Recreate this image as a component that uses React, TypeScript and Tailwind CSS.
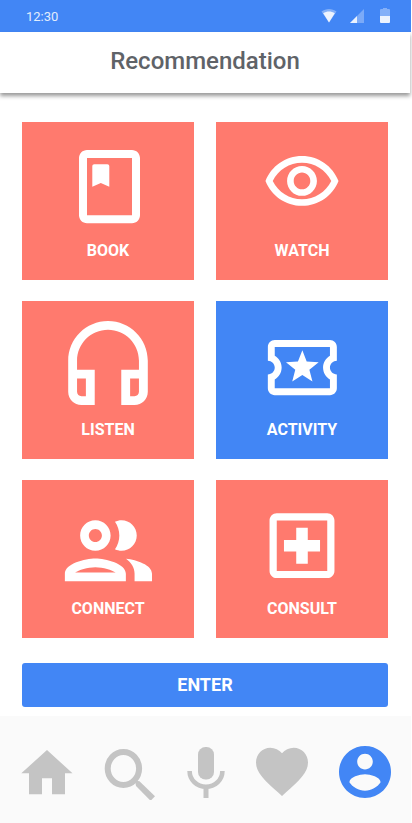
import type { ReactNode } from "react";
import { useState } from "react";

type Tile = {
  label: string;
  viewBox: string;
  art: ReactNode;
};

const tiles: Tile[] = [
  {
    label: "BOOK",
    viewBox: "0 0 88 88",
    art: (
      <>
        <path
          fillRule="evenodd"
          d="M23 8h45c4.4 0 8 3.6 8 8v57.3c0 4.4-3.6 8-8 8H23c-4.4 0-8-3.6-8-8V16c0-4.4 3.6-8 8-8zm0 8v57.3h45V16z"
        />
        <path d="M28.3 44.7V24.3c0-1.2.8-2 2-2h13c1.2 0 2 .8 2 2v20.4l-8.5-3.6z" />
      </>
    ),
  },
  {
    label: "WATCH",
    viewBox: "-1.26 -0.22 26.52 26.52",
    art: (
      <path d="M12 6c3.79 0 7.17 2.13 8.82 5.5C19.17 14.87 15.79 17 12 17s-7.17-2.13-8.82-5.5C4.83 8.13 8.21 6 12 6m0-2C7 4 2.73 7.11 1 11.5 2.73 15.89 7 19 12 19s9.27-3.11 11-7.5C21.27 7.11 17 4 12 4zm0 5c1.38 0 2.5 1.12 2.5 2.5S13.38 14 12 14s-2.5-1.12-2.5-2.5S10.62 9 12 9m0-2c-2.48 0-4.5 2.02-4.5 4.5S9.52 16 12 16s4.5-2.02 4.5-4.5S14.48 7 12 7z" />
    ),
  },
  {
    label: "LISTEN",
    viewBox: "2.05 1 19.9 19.9",
    art: (
      <path d="M12 1c-4.97 0-9 4.03-9 9v7c0 1.66 1.34 3 3 3h3v-8H5v-2c0-3.87 3.13-7 7-7s7 3.13 7 7v2h-4v8h3c1.66 0 3-1.34 3-3v-7c0-4.97-4.03-9-9-9zM7 14v4H6c-.55 0-1-.45-1-1v-3h2zm12 3c0 .55-.45 1-1 1h-1v-4h2v3z" />
    ),
  },
  {
    label: "ACTIVITY",
    viewBox: "-0.85 -1.5 25.5 25.5",
    art: (
      <path d="M22 10V6c0-1.11-.9-2-2-2H4c-1.1 0-1.99.89-1.99 2v4c1.1 0 1.99.9 1.99 2s-.89 2-2 2v4c0 1.1.9 2 2 2h16c1.1 0 2-.9 2-2v-4c-1.1 0-2-.9-2-2s.9-2 2-2zm-2-1.46c-1.19.69-2 1.99-2 3.46s.81 2.77 2 3.46V18H4v-2.54c1.19-.69 2-1.99 2-3.46 0-1.48-.8-2.77-1.99-3.46L4 6h16v2.54zM9.07 16L12 14.12 14.93 16l-.89-3.36 2.69-2.2-3.47-.21L12 7l-1.27 3.22-3.47.21 2.69 2.2z" />
    ),
  },
  {
    label: "CONNECT",
    viewBox: "1.8 0.34 20.2 20.2",
    art: (
      <path d="M9 13.75c-2.34 0-7 1.17-7 3.5V19h14v-1.75c0-2.33-4.66-3.5-7-3.5zM4.34 17c.84-.58 2.87-1.25 4.66-1.25s3.82.67 4.66 1.25H4.34zM9 12c1.93 0 3.5-1.57 3.5-3.5S10.93 5 9 5 5.5 6.57 5.5 8.5 7.07 12 9 12zm0-5c.83 0 1.5.67 1.5 1.5S9.83 10 9 10s-1.5-.67-1.5-1.5S8.17 7 9 7zm7.04 6.81c1.16.84 1.96 1.96 1.96 3.44V19h4v-1.75c0-2.02-3.5-3.17-5.96-3.44zM15 12c1.93 0 3.5-1.57 3.5-3.5S16.93 5 15 5c-.54 0-1.04.13-1.5.35.63.89 1 1.98 1 3.15s-.37 2.26-1 3.15c.46.22.96.35 1.5.35z" />
    ),
  },
  {
    label: "CONSULT",
    viewBox: "-0.2 -0.66 24.4 24.4",
    art: (
      <path d="M19 3H5c-1.1 0-2 .9-2 2v14c0 1.1.9 2 2 2h14c1.1 0 2-.9 2-2V5c0-1.1-.9-2-2-2zm0 16H5V5h14v14zM10.4 17h3.2v-3.4H17v-3.2h-3.4V7h-3.2v3.4H7v3.2h3.4z" />
    ),
  },
];

function StatusBar() {
  return (
    <div className="flex h-8 items-center justify-between bg-[#4286f5] pl-[26px] pr-[21px] text-white">
      <span className="pt-0.5 text-[13px] leading-4 opacity-85">12:30</span>
      <div className="flex items-center" aria-hidden="true">
        <svg className="mr-[13px] h-4 w-4" viewBox="0 0 16 16" fill="currentColor">
          <path d="M0.5 3.6C4.8 0.2 11.2 0.2 15.5 3.6L8 14.5z" opacity=".35" />
          <path d="M2.2 5.2C5.8 3 10.2 3 13.8 5.2L8 14.5z" opacity=".85" />
        </svg>
        <svg className="mr-4 h-4 w-[14px]" viewBox="0 0 14 16" fill="currentColor">
          <path d="M0 15L14 1v14z" opacity=".3" />
          <path d="M0 15l7-7v7z" opacity=".85" />
        </svg>
        <svg className="h-4 w-[10px]" viewBox="0 0 10 16" fill="currentColor">
          <path d="M3 0h4v1h2q1 0 1 1v6H0V2q0-1 1-1h2z" opacity=".35" />
          <path d="M0 8h10v6q0 1-1 1H1q-1 0-1-1z" opacity=".9" />
        </svg>
      </div>
    </div>
  );
}

function BottomNav() {
  return (
    <nav className="mt-auto flex h-[107px] items-center justify-between bg-[#fafafa] pl-[21px] pr-5 pt-1 text-[#c4c4c4]">
      <button type="button" aria-label="Home">
        <svg className="h-[52px] w-[52px]" viewBox="0 0 52 52" fill="currentColor">
          <path d="M26 4L51.5 27.3H44V48.3H31V32.3H21V48.3H8V27.3H.3z" />
        </svg>
      </button>
      <button type="button" aria-label="Search">
        <svg className="h-[56px] w-[52px]" viewBox="0 0 52 56" fill="currentColor">
          <ellipse cx="19.4" cy="24.5" rx="15.7" ry="16.4" fill="none" stroke="currentColor" strokeWidth="6" />
          <path d="M31 36.5l4.5.7L51 52.2l-4.4 4.6L32 42z" />
        </svg>
      </button>
      <button type="button" aria-label="Voice">
        <svg className="h-[52px] w-[38px]" viewBox="0 0 38 52" fill="currentColor">
          <rect x="11" y="1" width="16" height="32.5" rx="7.5" />
          <path d="M2.6 25c0 9 7.4 15.8 16.4 15.8S35.4 34 35.4 25" fill="none" stroke="currentColor" strokeWidth="4.6" />
          <path d="M16.5 41h5v11h-5z" />
        </svg>
      </button>
      <button type="button" aria-label="Favorites">
        <svg className="h-[52px] w-[52px]" viewBox="0 0 52 52" fill="currentColor">
          <path d="M26 50l-3.8-3.4C8.8 34.5 0 26.5 0 16.4 0 8.2 6.3 1.7 14.3 1.7c4.5 0 8.9 2.1 11.7 5.5 2.8-3.4 7.2-5.5 11.7-5.5C45.7 1.7 52 8.2 52 16.4c0 10.1-8.8 18.1-22.2 30.2z" />
        </svg>
      </button>
      <button type="button" aria-label="Profile" aria-current="page" className="text-[#4286f5]">
        <svg className="h-[52px] w-[52px]" viewBox="2 2 20 20" fill="currentColor">
          <path d="M12 2C6.48 2 2 6.48 2 12s4.48 10 10 10 10-4.48 10-10S17.52 2 12 2zm0 3c1.66 0 3 1.34 3 3s-1.34 3-3 3-3-1.34-3-3 1.34-3 3-3zm0 14.2c-2.5 0-4.71-1.28-6-3.22.03-1.99 4-3.08 6-3.08 1.99 0 5.97 1.09 6 3.08-1.29 1.94-3.5 3.22-6 3.22z" />
        </svg>
      </button>
    </nav>
  );
}

export default function App() {
  const [selected, setSelected] = useState("ACTIVITY");

  return (
    <div className="flex min-h-screen flex-col bg-white pr-px font-['Roboto',sans-serif]">
      <StatusBar />
      <header className="mr-px flex h-[61px] items-center justify-center bg-white pb-[3px] shadow-[0_3px_4px_rgba(0,0,0,0.4)]">
        <h1 className="text-2xl font-medium text-[#5f6368]">Recommendation</h1>
      </header>
      <main className="flex flex-col pb-[9px] pl-[22px] pr-[23px] pt-[29px]">
        <div className="grid grid-cols-2 gap-x-[22px] gap-y-[21px]">
          {tiles.map((tile) => (
            <button
              key={tile.label}
              type="button"
              aria-pressed={tile.label === selected}
              onClick={() => setSelected(tile.label)}
              className={
                tile.label === selected
                  ? "flex h-[158px] flex-col items-center bg-[#4286f5] pt-5 text-white"
                  : "flex h-[158px] flex-col items-center bg-[#ff7a6e] pt-5 text-white"
              }
            >
              <svg className="h-[88px] w-[88px]" viewBox={tile.viewBox} fill="currentColor" aria-hidden="true">
                {tile.art}
              </svg>
              <span className="mt-[11px] text-base leading-5 font-bold">{tile.label}</span>
            </button>
          ))}
        </div>
        <button type="button" className="mt-[25px] h-11 rounded-[3px] bg-[#4286f5] text-lg font-bold text-white">
          ENTER
        </button>
      </main>
      <BottomNav />
    </div>
  );
}
